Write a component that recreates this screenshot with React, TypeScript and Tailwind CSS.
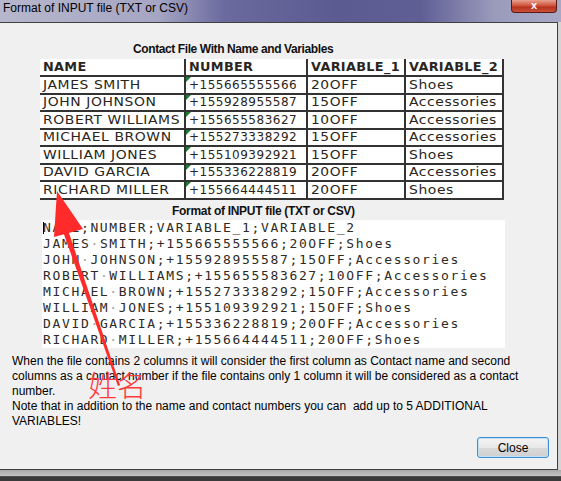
import React from "react";

const rows = [
  ["JAMES SMITH", "+155665555566", "20OFF", "Shoes"],
  ["JOHN JOHNSON", "+155928955587", "15OFF", "Accessories"],
  ["ROBERT WILLIAMS", "+155655583627", "10OFF", "Accessories"],
  ["MICHAEL BROWN", "+155273338292", "15OFF", "Accessories"],
  ["WILLIAM JONES", "+155109392921", "15OFF", "Shoes"],
  ["DAVID GARCIA", "+155336228819", "20OFF", "Accessories"],
  ["RICHARD MILLER", "+155664444511", "20OFF", "Shoes"],
];

const cols = ["w-[146px]", "w-[122px]", "w-[98px]", "w-[98px]"];

function Cell({
  i,
  children,
  mark,
  wide,
}: {
  i: number;
  children: React.ReactNode;
  mark?: boolean;
  wide?: string;
}) {
  return (
    <div className={`${cols[i]} relative h-full border-r-2 border-[#333] pl-[3px] flex items-center whitespace-nowrap overflow-hidden`}>
      {mark && (
        <span className="absolute left-0 top-0 w-0 h-0 border-t-[5px] border-r-[5px] border-t-[#1f7a33] border-r-transparent" />
      )}
      <span className={`inline-block origin-left ${wide ?? ""}`}>{children}</span>
    </div>
  );
}

// spaces in the editor preview are shown as dots
function PreviewLine({ text }: { text: string }) {
  const parts = text.split(" ");
  return (
    <div className="h-[16px] leading-[16px] whitespace-pre">
      {parts.map((p, i) => (
        <React.Fragment key={i}>
          {i > 0 && <span className="text-[#a0a0a0]">·</span>}
          {p}
        </React.Fragment>
      ))}
    </div>
  );
}

export default function App() {
  return (
    <div className="relative w-[561px] h-[481px] overflow-hidden bg-[#c8c8c8] font-['Liberation_Sans',Arial,sans-serif]">
      {/* Title bar */}
      <div className="h-[22px] flex items-start justify-between bg-[linear-gradient(90deg,#b6b6cc_0%,#a6a6c4_28%,#6a6a9e_40%,#5b5b92_60%,#5f5f96_75%,#9a9abb_88%,#a8a8c6_100%)]">
        <span className="pl-[3px] pt-[1px] text-[12px] leading-[15px] text-black">Format of INPUT file (TXT or CSV)</span>
        <div className="mr-[4px] w-[46px] h-[13px] rounded-b-[4px] border border-t-0 border-[#5a1a14] bg-[linear-gradient(180deg,#e8a291_0%,#d0573f_45%,#b8321c_60%,#c9533c_100%)] flex items-center justify-center">
          <span className="text-white text-[11px] font-bold leading-none -mt-[2px]">x</span>
        </div>
      </div>

      <div className="flex">
        {/* Client area */}
        <div className="w-[558px] h-[448px] bg-[#f0f0f0] border-t border-r border-b border-[#404040] flex flex-col">
          <div className="mt-[19px] ml-[133px] text-[12px] leading-[14px] font-bold text-[#111] tracking-[-0.4px]">
            Contact File With Name and Variables
          </div>

          {/* Spreadsheet sample */}
          <div className="mt-[3px] ml-[40px] w-[464px] bg-white text-[12px] text-[#2a2520] font-['DejaVu_Sans',sans-serif] tracking-[0.5px]">
            <div className="flex h-[18px] border-b-2 border-[#333] font-bold tracking-[0.3px]">
              <Cell i={0} wide="scale-x-[1.07]">NAME</Cell>
              <Cell i={1} wide="scale-x-[1.07]">NUMBER</Cell>
              <Cell i={2} wide="scale-x-[1.07]">VARIABLE_1</Cell>
              <Cell i={3} wide="scale-x-[1.07]">VARIABLE_2</Cell>
            </div>
            {rows.map((r) => (
              <div key={r[0]} className="flex h-[17.5px] border-b-2 border-[#333]">
                <Cell i={0} wide="scale-x-[1.16]">{r[0]}</Cell>
                <Cell i={1} mark>{r[1]}</Cell>
                <Cell i={2} wide="scale-x-[1.15]">{r[2]}</Cell>
                <Cell i={3} wide="scale-x-[1.16]">{r[3]}</Cell>
              </div>
            ))}
          </div>

          <div className="mt-[4px] ml-[172px] text-[12px] leading-[14px] font-bold text-[#111] tracking-[-0.3px]">
            Format of INPUT file (TXT or CSV)
          </div>

          {/* Text file preview */}
          <div className="relative mt-[2px] ml-[42px] w-[463px] h-[128px] bg-white pl-[1px] text-[13px] text-[#2e2a26] font-['DejaVu_Sans_Mono',monospace] tracking-[1.65px]">
            <span className="absolute left-[1px] top-[2px] w-[1px] h-[12px] bg-black" />
            <PreviewLine text="NAME;NUMBER;VARIABLE_1;VARIABLE_2" />
            {rows.map((r) => (
              <PreviewLine key={r[0]} text={r.join(";")} />
            ))}
          </div>

          <p className="mt-[6px] ml-[12px] text-[12px] leading-[15px] text-black">
            When the file contains 2 columns it will consider the first column as Contact name and second
            <br />
            columns as a contact number if the file contains only 1 column it will be considered as a contact
            <br />
            number.
            <br />
            Note that in addition to the name and contact numbers you can&nbsp; add up to 5 ADDITIONAL
            <br />
            VARIABLES!
          </p>

          <div className="mt-auto mb-[11px] mr-[8px] flex justify-end">
            <button className="w-[72px] h-[21px] rounded-[3px] border border-[#3c8fd4] bg-[linear-gradient(180deg,#f4f4f4_0%,#e8e8e8_50%,#d9d9d9_51%,#d0d0d0_100%)] text-[12px] text-black shadow-[inset_0_0_0_1px_#bfe2f8]">
              Close
            </button>
          </div>
        </div>
        <div className="flex-1 bg-[#d4d4d4]" />
      </div>

      {/* Window bottom frame */}
      <div className="h-[6px] bg-[linear-gradient(180deg,#a8a8a8,#c4c4c4)]" />
      <div className="h-[1px] bg-[#505050]" />
      <div className="h-[4px] bg-[#3a3a3a]" />

      {/* Red annotation */}
      <svg className="absolute left-0 top-0 pointer-events-none" width="561" height="481">
        <polygon points="57,191 83,229 54,237" fill="#ff2a2a" />
        <polygon points="61,226 66,224 120,385 118,386" fill="#ff2a2a" />
      </svg>
      <span className="absolute left-[88px] top-[366px] text-[29px] leading-[36px] text-[#ff3b3b] font-['Noto_Sans_CJK_SC',sans-serif] font-light">
        姓名
      </span>
    </div>
  );
}
